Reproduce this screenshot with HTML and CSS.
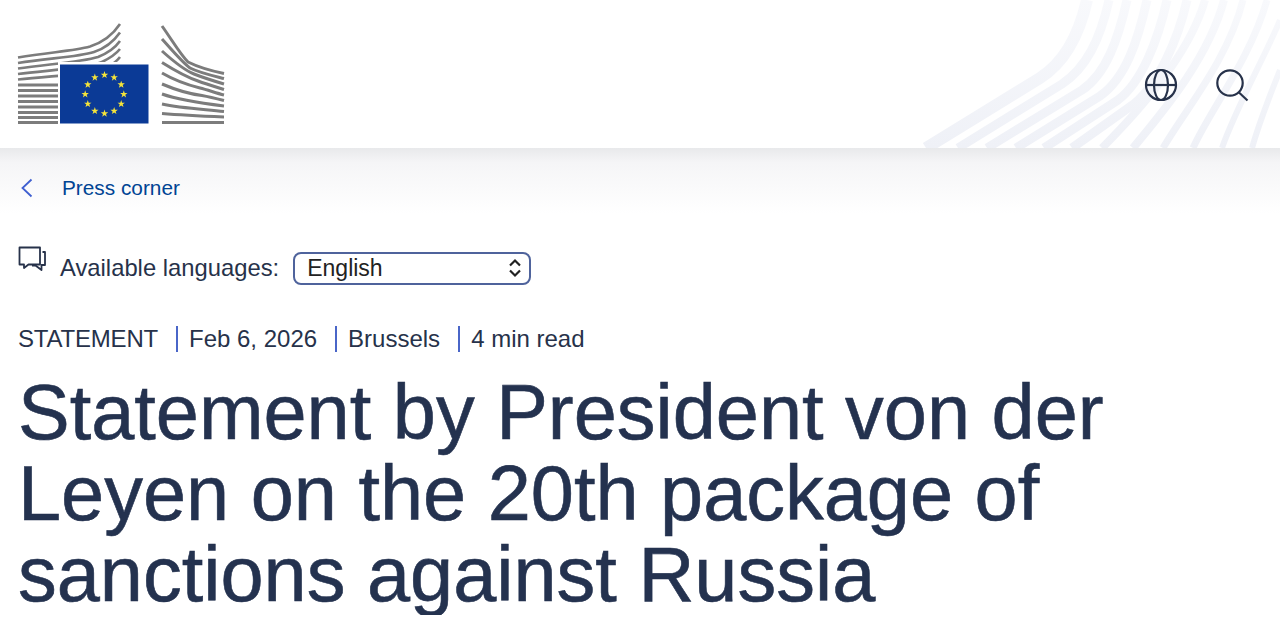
FILE: index.html

```html
<!DOCTYPE html>
<html lang="en">
<head>
  <meta charset="UTF-8" />
  <meta name="viewport" content="width=device-width, initial-scale=1.0"/>
  <title>Statement by President von der Leyen</title>
  <link rel="stylesheet" href="styles.css">
</head>
<body>
  <header class="site-header">
    <svg class="header-lines" width="380" height="148" viewBox="900 0 380 148" fill="none" stroke="url(#line-fade)" aria-hidden="true">
      <defs>
        <linearGradient id="line-fade" gradientUnits="userSpaceOnUse" x1="0" y1="148" x2="0" y2="0">
          <stop offset="0" stop-color="#eff1f7"/>
          <stop offset="1" stop-color="#f8f9fc"/>
        </linearGradient>
      </defs>
      <path stroke-width="12" d="M926 148 L1040 78 C1062 64 1078 40 1087 0"/>
      <path stroke-width="9" d="M958 148 L1062 84 C1086 68 1100 40 1109 0"/>
      <path stroke-width="9" d="M987 148 L1082 90 C1106 74 1118 40 1127 0"/>
      <path stroke-width="9" d="M1016 148 L1100 96 C1126 78 1138 40 1147 0"/>
      <path stroke-width="9" d="M1044 148 L1118 100 C1142 82 1158 40 1167 0"/>
      <path stroke-width="9" d="M1072 148 L1134 104 C1158 84 1178 40 1187 0"/>
      <path stroke-width="8" d="M1102 148 C1130 120 1188 60 1205 0"/>
      <path stroke-width="8" d="M1133 148 C1160 115 1208 60 1224 0"/>
      <path stroke-width="7" d="M1163 148 C1185 110 1228 60 1243 0"/>
      <path stroke-width="7" d="M1193 148 C1210 110 1250 60 1267 0"/>
      <path stroke-width="6" d="M1222 148 C1235 110 1268 50 1280 20"/>
      <path stroke-width="6" d="M1252 148 C1260 120 1272 90 1280 70"/>
    </svg>

    <svg class="logo" width="210" height="104" viewBox="16 22 210 104" fill="none" stroke="#7c7c7c" stroke-width="3" role="img" aria-label="European Commission">
      <path d="M18 57.500C50 52 74 51 90 46.500C104 42 114 33 120 24" stroke-width="2.600"/>
      <path d="M18 63C50 58 78 57 94 52C106 48 114 41 120 32.500" stroke-width="2.600"/>
      <path d="M18 68.500C50 64 82 62 98 57C108 53 115 48 120 41" stroke-width="2.600"/>
      <path d="M18 74C50 70 90 68 102 62C110 58 116 54 120 49" stroke-width="2.600"/>
      <path d="M18 79.500C60 75 100 74 108 67C113 64 117 61 120 57" stroke-width="2.600"/>
      <path d="M18 85H58M18 90.500H58M18 96H58M18 101.500H58M18 107H58M18 112.500H58M18 117.500H58M18 122.500H58"/>
      <rect x="58" y="62" width="93" height="64" fill="#fff" stroke="none"/>
      <rect x="60" y="64.500" width="88.500" height="59" fill="#0b3a96" stroke="none"/>
      <g fill="#f5e43a" stroke="none">
        <polygon id="star" points="104.500,71 105.400,73.700 108.200,73.700 106,75.400 106.800,78.100 104.500,76.500 102.200,78.100 103,75.400 100.800,73.700 103.600,73.700"/>
        <use href="#star" x="9.650" y="2.600"/>
        <use href="#star" x="16.700" y="9.650"/>
        <use href="#star" x="19.300" y="19.300"/>
        <use href="#star" x="16.700" y="28.950"/>
        <use href="#star" x="9.650" y="36"/>
        <use href="#star" x="0" y="38.600"/>
        <use href="#star" x="-9.650" y="36"/>
        <use href="#star" x="-16.700" y="28.950"/>
        <use href="#star" x="-19.300" y="19.300"/>
        <use href="#star" x="-16.700" y="9.650"/>
        <use href="#star" x="-9.650" y="2.600"/>
      </g>
      <path d="M162 26C172 40 180 54 188 62C198 67 212 71 224 73.500"/>
      <path d="M162 39C172 50 182 62 190 68C200 73 214 76 224 78.500"/>
      <path d="M162 51C172 60 184 70 194 74C204 78 214 81 224 84"/>
      <path d="M162 62.500C174 70 186 77 198 81C206 84 216 87 224 89.500"/>
      <path d="M162 73C174 80 188 85 200 88C208 90 216 93 224 95"/>
      <path d="M162 84C176 90 190 94 202 95.500C210 97 218 99 224 100.500"/>
      <path d="M162 94C176 99 192 102 224 106"/>
      <path d="M162 104C180 108 200 109 224 111.500"/>
      <path d="M162 113.500C180 115 200 116 224 117"/>
      <path d="M162 122.500H224"/>
    </svg>

    <div class="header-actions">
      <svg class="icon" width="34" height="34" viewBox="0 0 34 34" fill="none" stroke="#27324a" stroke-width="2.200" aria-label="Language">
        <circle cx="17" cy="17" r="15"/>
        <ellipse cx="17" cy="17" rx="7" ry="15"/>
        <path d="M2 17H32"/>
      </svg>
      <svg class="icon" width="34" height="34" viewBox="0 0 34 34" fill="none" stroke="#27324a" stroke-width="2.200" aria-label="Search">
        <circle cx="15" cy="15" r="12.700"/>
        <path d="M24 24.500L32.500 32.500"/>
      </svg>
    </div>
  </header>

  <nav class="breadcrumb">
    <svg width="12" height="20" viewBox="0 0 12 20" fill="none" stroke="#3f5fd0" stroke-width="1.800" aria-hidden="true">
      <path d="M10.500 1.500L1.500 10L10.500 18.500"/>
    </svg>
    <a href="#" class="breadcrumb-link">Press corner</a>
  </nav>

  <main class="content">
    <div class="languages">
      <svg class="chat-icon" width="28" height="26" viewBox="0 0 28 26" fill="none" stroke="#27324a" stroke-width="1.800" stroke-linejoin="round" aria-hidden="true">
        <path d="M1.500 1.500H22V18.500H10.500L6 22V18.500H1.500Z"/>
        <path d="M24.500 6H27V19H23.500V24L17.500 19.500H14"/>
      </svg>
      <label class="languages-label" for="lang">Available languages:</label>
      <div class="select-wrap">
        <select id="lang" class="lang-select">
          <option>English</option>
        </select>
        <svg class="select-arrows" width="14" height="20" viewBox="0 0 14 20" fill="none" stroke="#222" stroke-width="2.200" aria-hidden="true">
          <path d="M2 7.500L7 2.500L12 7.500M2 12.500L7 17.500L12 12.500"/>
        </svg>
      </div>
    </div>

    <ul class="meta">
      <li>STATEMENT</li>
      <li>Feb 6, 2026</li>
      <li>Brussels</li>
      <li>4 min read</li>
    </ul>

    <h1>Statement by President von der Leyen on the 20th package of sanctions against Russia</h1>
  </main>
</body>
</html>
```

FILE: styles.css

```css
* {
  box-sizing: border-box;
}
body {
  margin: 0;
  font-family: 'Liberation Sans', Arial, sans-serif;
  background-color: #fff;
  color: #27324a;
  overflow: hidden;
}
.site-header {
  position: relative;
  height: 148px;
  display: flex;
  justify-content: space-between;
  align-items: flex-start;
  padding: 22px 31px 0 16px;
  background: #fff;
}
.header-lines {
  position: absolute;
  top: 0;
  right: 0;
}
.logo {
  position: relative;
}
.header-actions {
  position: relative;
  display: flex;
  gap: 37px;
  margin-top: 46px;
}
.breadcrumb {
  height: 80px;
  display: flex;
  align-items: flex-start;
  gap: 29px;
  padding: 30px 0 0 21px;
  background: linear-gradient(#e8e9eb, #f5f5f7 18%, #fff 82%);
}
.breadcrumb-link {
  color: #004494;
  font-size: 20.800px;
  line-height: 20px;
  text-decoration: none;
}
.content {
  padding: 0 18px;
}
.languages {
  display: flex;
  align-items: center;
  height: 40px;
  margin-top: 20px;
}
.chat-icon {
  margin: -18px 14px 0 0;
}
.languages-label {
  font-size: 23.800px;
  margin-right: 14px;
}
.select-wrap {
  position: relative;
}
.lang-select {
  appearance: none;
  display: block;
  width: 238px;
  height: 33px;
  padding: 0 12px;
  font-family: inherit;
  font-size: 23px;
  color: #222;
  background: #fff;
  border: 2px solid #4f639c;
  border-radius: 8px;
}
.select-arrows {
  position: absolute;
  top: 6px;
  right: 9px;
}
.meta {
  list-style: none;
  display: flex;
  margin: 38px 0 0;
  padding: 0;
  font-size: 24px;
  line-height: 26px;
}
.meta li {
  padding: 0 18px 0 11px;
  border-left: 2px solid #4a66c8;
}
.meta li:first-child {
  padding-left: 0;
  border-left: none;
  letter-spacing: -0.2px;
}
h1 {
  margin: 20px 0 0;
  max-width: 1120px;
  font-size: 77.500px;
  line-height: 81px;
  font-weight: 400;
  color: #24324f;
  -webkit-text-stroke: 0.6px #24324f;
}
```
